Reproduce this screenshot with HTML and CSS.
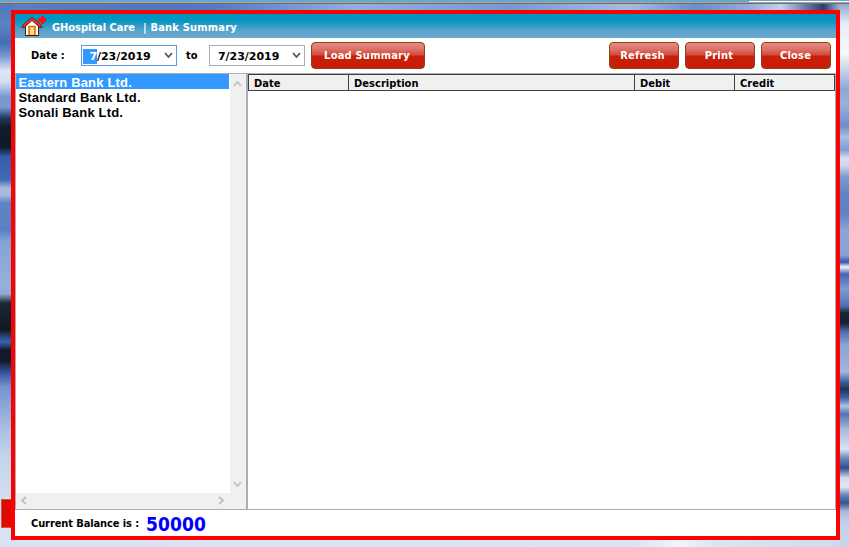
FILE: index.html
```html
<!DOCTYPE html>
<html lang="en">
<head>
<meta charset="utf-8">
<title>GHospital Care | Bank Summary</title>
<link rel="stylesheet" href="styles.css">
</head>
<body>
<div class="topbar"><i></i></div>
<div class="scene-left"></div>
<div class="scene-right"></div>
<div class="red-tile"></div>
<main class="window">
  <header class="title">
    <svg class="home" width="25" height="21" viewBox="0 0 25 21">
      <path d="M17 2h3V0h3v2h2v4h-2v2h-3V6h-3z" fill="#e91520"/>
      <path d="M4.500 10 11 4l6.500 6v9.500h-13z" fill="#fff" stroke="#541507"/>
      <path d="M1 11.500V10l9-8h2l9 8v1.500h-2l-8-7-8 7z" fill="#ef3925" stroke="#5f120b" stroke-width=".8"/>
      <path d="M8 19.500V10.500h6v9z" fill="#ffe07a" stroke="#e0700b" stroke-width="1.6"/>
      <path d="M4 19.500h14" stroke="#541507"/>
    </svg>
    <span class="app">GHospital Care</span><span class="page">| Bank Summary</span>
  </header>
  <section class="toolbar">
    <span class="lbl date-lbl">Date :</span>
    <div class="picker focus"><span class="value"><b>7</b>/23/2019</span><svg width="9" height="7" viewBox="0 0 9 7"><path d="M1 1l3.500 4L8 1"/></svg></div>
    <span class="lbl to-lbl">to</span>
    <div class="picker"><span class="value">7/23/2019</span><svg width="9" height="7" viewBox="0 0 9 7"><path d="M1 1l3.500 4L8 1"/></svg></div>
    <button class="btn load"><span>Load Summary</span></button>
    <div class="actions">
      <button class="btn"><span class="t-refresh">Refresh</span></button>
      <button class="btn"><span class="t-print">Print</span></button>
      <button class="btn"><span class="t-close">Close</span></button>
    </div>
  </section>
  <section class="content">
    <div class="banks">
      <ul>
        <li class="selected">Eastern Bank Ltd.</li>
        <li>Standard Bank Ltd.</li>
        <li>Sonali Bank Ltd.</li>
      </ul>
      <div class="vscroll">
        <svg width="9" height="7" viewBox="0 0 9 7"><path d="M1 6l3.500-4L8 6"/></svg>
        <svg width="9" height="7" viewBox="0 0 9 7"><path d="M1 1l3.500 4L8 1"/></svg>
      </div>
      <div class="hscroll">
        <svg width="7" height="9" viewBox="0 0 7 9"><path d="M6 1L2 4.500l4 3.500"/></svg>
        <svg width="7" height="9" viewBox="0 0 7 9"><path d="M1 1l4 3.500L1 8"/></svg>
      </div>
    </div>
    <div class="grid">
      <div class="head"><span>Date</span><span>Description</span><span>Debit</span><span>Credit</span></div>
    </div>
  </section>
  <footer class="footer"><span class="lbl bal-lbl">Current Balance is :</span><strong>50000</strong></footer>
</main>
</body>
</html>
```
FILE: styles.css
```css
* { box-sizing: border-box; }
body {
  margin: 0; width: 849px; height: 547px; overflow: hidden; position: relative;
  padding: 10px 0 0 11px;
  font: bold 11px/14px "DejaVu Sans Condensed", "DejaVu Sans", sans-serif;
  font-stretch: condensed;
  color: #000;
  background:
    linear-gradient(90deg, #d8e2f3, #d9e3f4 38%, #dce3f4 75%, #f2f5fa 80%, #dbe5f3 84%, #cedaec) 0 540px / 100% 7px no-repeat,
    linear-gradient(90deg, #587fc4, #4e78c0 18%, #5379c4 25%, #94aedd 42%, #7898d2 60%, #a7bbe1 74%, #6b8dca 82%, #93abd7 88%, #c4d1ea 92%, #263f70 97%, #edf1f8) 0 3px / 100% 7px no-repeat,
    #aebfe0;
}
.topbar { position: absolute; left: 0; top: 0; width: 849px; height: 4px; background: #69a8ce; border-bottom: 1px solid #706d70; box-shadow: inset 0 -1px #aaa29c; }
.topbar i { position: absolute; right: 0; top: 1px; width: 100px; height: 1px; background: #fff; }
.scene-left {
  position: absolute; left: 0; top: 4px; width: 11px; height: 543px;
  background: linear-gradient(#5279bd 0, #5b82c3 20px, #456eb2 39px, #7598d0 52px, #dfe8f6 67px, #d2def2 78px, #7799d0 93px, #769ad2 103px, #23395e 114px, #111b2c 123px, #10192a 143px, #345da7 153px, #406bb3 176px, #a6bddf 184px, #a2b9dc 191px, #5d84c5 199px, #5a80c3 226px, #83a3d5 237px, #98b0d9 280px, #92a9d4 290px, #1d2637 299px, #101820 326px, #2e508d 334px, #3763b2 338px, #10192a 346px, #111b2d 357px, #3656a3 369px, #7593d0 383px, #aabfe3 425px, #c5d4ec 453px, #d0deed 494px, #d8e3f2 510px, #d8e2f4);
}
.scene-right {
  position: absolute; left: 840px; top: 4px; width: 9px; height: 543px;
  background: linear-gradient(#8fa8d4, #e8eef8 20px, #f5f8fc 50px, #b3c5e5 72px, #8ba7d6 85px, #9ab2dd 100px, #6a8dca 122px, #a9bfe4 133px, #7d9cd3 146px, #d5dff0 154px, #cfdbee 161px, #7d9bd2 173px, #5e83c5 190px, #5e83c5 210px, #8ba4d8 226px, #88a3d8 251px, #2f56a5 258px, #f0f4fb 263px, #4068b3 270px, #7d9bd2 285px, #4a72b8 302px, #1a2336 309px, #172136 319px, #4a70b4 328px, #8aa5d6 341px, #a0b4de 368px, #3a60a0 378px, #1c3458 385px, #3a64a8 394px, #b0c2e0 402px, #4f75b3 410px, #a3b8dc 425px, #dbe5f3 445px, #668abf 454px, #2c5090 464px, #d0dcec 474px, #e0e8f4 483px, #6285bd 491px, #325790 499px, #a4b8da 507px, #c0d0e8 518px, #c8d6eb);
}
.red-tile { position: absolute; left: 1px; top: 499px; width: 12px; height: 29px; background: #df0900; border: 1px solid #d3553f; }
.window {
  position: relative; width: 829px; height: 530px;
  border: 4px solid #f00; background: #fff; display: flex; flex-direction: column;
}
.title {
  height: 24px; flex: none; display: flex; align-items: center; color: #fff;
  background: linear-gradient(#0093c0, #0794c1 28%, #62a6cc 76%, #68a9ce); padding-left: 6px;
}
.home { flex: none; margin-top: 1px; }
.app { width: 91px; margin-left: 6px; margin-top: 3px; white-space: pre; letter-spacing: -.03px; }
.page { margin-top: 3px; white-space: pre; letter-spacing: .2px; }
.toolbar { height: 35px; flex: none; display: flex; align-items: center; padding: 0 5px 0 16px; }
.lbl { white-space: pre; padding-top: 1px; }
.date-lbl { width: 50px; }
.to-lbl { width: 32px; padding-left: 9px; }
.picker { width: 96px; height: 21px; border: 1px solid #abadb3; display: flex; align-items: center; justify-content: space-between; padding: 0 3px 0 8px; }
.picker svg { flex: none; }
.picker.focus { border-color: #569de5; padding-left: 1px; }
.value { font: bold 11px/15px "DejaVu Sans", sans-serif; font-stretch: normal; white-space: pre; padding-top: 1px; letter-spacing: -.04px; }
.value b { display: inline-block; height: 15px; width: 14px; text-align: right; color: #fff; background: #3399ff; }
.picker path { fill: none; stroke: #555; stroke-width: 1.8; }
.btn {
  font: bold 11px/14px "DejaVu Sans Condensed", "DejaVu Sans", sans-serif; font-stretch: condensed;
  letter-spacing: .22px; color: #fff;
  width: 70px; height: 27px; padding: 0; border: 1px solid #8d4314; border-radius: 4px;
  background: linear-gradient(#e28d84, #dc7167 25%, #d1483b 49%, #c72008 51%, #c91d08);
  white-space: pre;
}
.btn span { display: block; }
.load { width: 114px; margin-left: 6px; }
.load span { padding-right: 2px; }
.actions { display: flex; gap: 6px; margin-left: auto; }
.t-refresh { padding-right: 3px; }
.t-print { padding-right: 2px; }
.t-close { padding-right: 1px; }
.content { height: 437px; flex: none; display: flex; border-top: 1px solid #abadb3; border-bottom: 1px solid #abadb3; }
.banks { width: 232px; flex: none; border-left: 1px solid #abadb3; border-right: 1px solid #abadb3; display: grid; grid-template: 419px 16px / 214px 16px; background: #f0f0f0; }
ul { margin: 0; padding: 0; list-style: none; background: #fff; font: bold 13px/15px "Liberation Sans", sans-serif; letter-spacing: .17px; }
li { height: 15px; padding: 1px 0 0 2.500px; white-space: pre; }
.selected { background: #3399ff; color: #fff; width: 213px; }
.vscroll { display: flex; flex-direction: column; justify-content: space-between; align-items: center; padding: 6px 2px 5px 0; }
.hscroll { grid-column: 1 / 2; display: flex; justify-content: space-between; align-items: center; padding: 0 5px 2px 4px; }
.vscroll path, .hscroll path { fill: none; stroke: #bfbfbf; stroke-width: 1.8; }
.grid { flex: 1; min-width: 0; border-left: 1px solid #abadb3; border-right: 1px solid #abadb3; }
.head { height: 17px; display: grid; grid-template-columns: 100px 286px 100px 1fr; border: 1px solid #404040; background: #f0f0f0; }
.head span { padding-left: 5px; line-height: 17px; border-right: 1px solid #404040; white-space: pre; height: 15px; letter-spacing: .05px; }
.head span:last-child { border-right: 0; }
.footer { height: 26px; display: flex; align-items: center; padding: 1px 0 0 16px; }
.bal-lbl { width: 115px; letter-spacing: -.1px; }
.footer strong { color: #0000ff; font-size: 19px; line-height: 22px; letter-spacing: .12px; }
```
